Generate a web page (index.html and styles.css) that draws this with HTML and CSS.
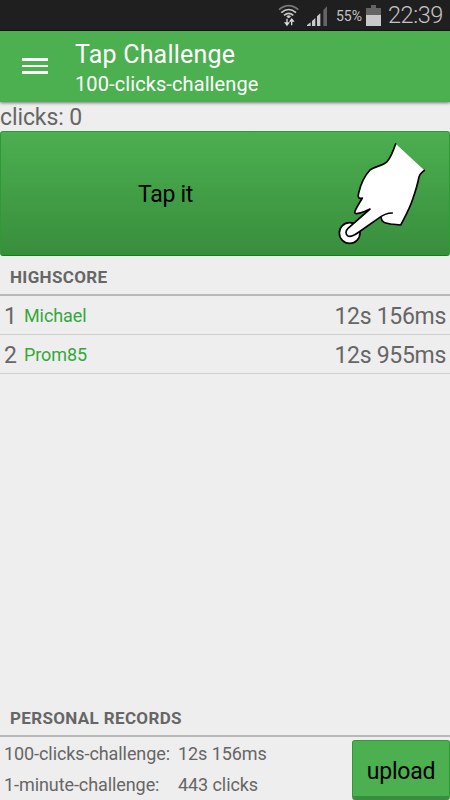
FILE: index.html
```html
<!DOCTYPE html>
<html lang="en">
<head>
  <meta charset="UTF-8" />
  <title>Tap Challenge</title>
  <link rel="stylesheet" href="styles.css">
</head>
<body>

  <div class="statusbar">
    <svg class="wifi" width="22" height="24" viewBox="0 0 66 72">
      <g fill="none" stroke="#c8c8c8" stroke-width="5">
        <path d="M3 17 Q32 -7 61 17" stroke="#777" />
        <path d="M10 26 Q32 7 54 26" />
        <path d="M18 34 Q32 22 46 34" />
      </g>
      <path d="M25 37 Q32 31 39 37 L34 42 H30 Z" fill="#c8c8c8" />
      <path d="M27 44 V58 M41 64 V50" stroke="#d8d8d8" stroke-width="4" />
      <path d="M18 55 H36 L27 67 Z M33 53 L41 42 L50 53 Z" fill="#d8d8d8" />
    </svg>
    <svg class="signal" width="22" height="22" viewBox="0 0 66 66">
      <path d="M3 63 V60 L14 52 V63 Z M18 63 V48 L28 39 V63 Z M33 63 V34 L43 25 V63 Z" fill="#c8c8c8" />
      <path d="M52 63 V15 L63 4 V63 Z" fill="#646464" />
    </svg>
    <span class="percent">55%</span>
    <svg class="battery" width="15" height="21" viewBox="0 0 15 21">
      <path d="M5 0 H10 V3 H15 V11 H0 V3 H5 Z" fill="#646464" />
      <rect y="10" width="15" height="11" fill="#c8c8c8" />
    </svg>
    <span class="time">22:39</span>
  </div>

  <header>
    <div class="menu">
      <span></span>
      <span></span>
      <span></span>
    </div>
    <div class="titles">
      <h1>Tap Challenge</h1>
      <h2>100-clicks-challenge</h2>
    </div>
  </header>

  <div class="clicks">clicks: 0</div>

  <button class="tap">
    <span class="tap-label">Tap it</span>
    <svg class="hand" width="90" height="105" viewBox="50 45 270 315">
      <circle cx="88" cy="321" r="31" fill="#fff" stroke="#000" stroke-width="5" />
      <path d="M226 53 C219 74 211 94 201 106 C188 120 162 121 149 132 C134 148 121 175 115 201 C112 213 114 220 126 216 C116 234 107 245 103 259 C104 268 125 260 149 249 L83 307 C75 314 75 326 83 330 C92 334 105 326 116 318 L181 273 C180 291 194 291 212 294 L241 297 C254 272 267 251 277 220 C286 194 292 174 296 153 C298 143 305 140 312 133 Z" fill="#fff" />
      <path d="M226 53 C219 74 211 94 201 106 C188 120 162 121 149 132 C134 148 121 175 115 201 C112 213 114 220 126 216 C116 234 107 245 103 259 C104 268 125 260 149 249 L83 307 C75 314 75 326 83 330 C92 334 105 326 116 318 L173 278 C187 267 200 261 216 261 M182 274 C184 291 196 291 212 294 L241 297 C254 272 267 251 277 220 C286 194 292 174 296 153 C298 143 305 140 312 133" fill="none" stroke="#000" stroke-width="5" stroke-linejoin="round" stroke-linecap="round" />
    </svg>
  </button>

  <h3 class="section">HIGHSCORE</h3>
  <div class="scores">
    <div class="row">
      <span class="rank">1</span>
      <span class="name">Michael</span>
      <span class="score">12s 156ms</span>
    </div>
    <div class="row">
      <span class="rank">2</span>
      <span class="name">Prom85</span>
      <span class="score">12s 955ms</span>
    </div>
  </div>

  <h3 class="section">PERSONAL RECORDS</h3>
  <div class="records">
    <div class="table">
      <span>100-clicks-challenge:</span>
      <span>12s 156ms</span>
      <span>1-minute-challenge:</span>
      <span>443 clicks</span>
    </div>
    <button class="upload">upload</button>
  </div>

</body>
</html>
```

FILE: styles.css
```css
* {
  box-sizing: border-box;
}

body {
  display: flex;
  flex-direction: column;
  height: 800px;
  margin: 0;
  overflow: hidden;
  font-family: Roboto, sans-serif;
  color: #666;
  background-color: #eee;
}

h1,
h2,
h3 {
  margin: 0;
  font-weight: normal;
}

button {
  padding: 0;
  border: none;
  font-family: inherit;
  color: #000;
  cursor: pointer;
}

.statusbar {
  display: flex;
  justify-content: flex-end;
  align-items: center;
  height: 31px;
  padding-right: 7px;
  background-color: #1f1f1f;
  border-bottom: 1px solid #171320;
  color: #c4c4c4;
}

.wifi {
  margin: 2px 6px 0 0;
}

.signal {
  margin: 1px 8px 0 0;
}

.percent {
  margin-right: 4px;
  padding-top: 2px;
  font-size: 14px;
}

.battery {
  margin-right: 7px;
}

.time {
  font-size: 23.5px;
  font-weight: 300;
  letter-spacing: -0.4px;
}

header {
  position: relative;
  display: flex;
  height: 71px;
  background-color: #4caf50;
  box-shadow: 0 1px 3px rgba(0, 0, 0, 0.5);
  color: #fff;
}

.menu {
  display: flex;
  flex-direction: column;
  gap: 4px;
  width: 26px;
  margin: 27px 27px 0 22px;
}

.menu span {
  height: 2.5px;
  background-color: #fff;
}

.titles h1 {
  margin-top: 9px;
  font-size: 25px;
  line-height: 30px;
  letter-spacing: 0.2px;
}

.titles h2 {
  margin-top: 1px;
  font-size: 20px;
  line-height: 26px;
  letter-spacing: 0.1px;
}

.clicks {
  height: 29px;
  font-size: 23px;
  line-height: 31px;
  letter-spacing: -0.1px;
}

.tap {
  display: flex;
  align-items: center;
  height: 125px;
  background: linear-gradient(#4caf50, #388e3c);
  border: 1px solid #2f9a35;
  border-bottom-color: #0b860f;
  border-radius: 3px;
  font-size: 23px;
  letter-spacing: -0.3px;
}

.tap-label {
  width: 329px;
  padding-top: 2px;
  text-align: center;
}

.hand {
  margin: 0 0 1px 7px;
}

.section {
  height: 40px;
  padding: 3px 0 0 10px;
  border-bottom: 2px solid #b8b8b8;
  font-size: 17px;
  font-weight: 700;
  line-height: 37px;
  letter-spacing: 0.35px;
}

.scores {
  flex-grow: 1;
}

.row {
  display: flex;
  align-items: center;
  height: 39px;
  padding: 2px 4px 0;
  border-bottom: 1px solid #cfcfcf;
  font-size: 23px;
}

.rank {
  width: 20px;
}

.name {
  flex-grow: 1;
  padding-bottom: 1px;
  font-size: 18px;
  letter-spacing: -0.1px;
  color: #35a83a;
}

.score {
  letter-spacing: -0.3px;
}

.records {
  display: flex;
  justify-content: space-between;
  height: 63px;
}

.table {
  display: grid;
  grid-template-columns: 174px auto;
  grid-auto-rows: 31px;
  padding: 1px 0 0 4px;
  font-size: 18px;
  line-height: 31px;
  letter-spacing: -0.08px;
  white-space: nowrap;
}

.upload {
  width: 98px;
  height: 60px;
  margin-top: 3px;
  padding-top: 5px;
  background-color: #4caf50;
  border: 1px solid #2f9a35;
  border-bottom: 4px solid #388e3c;
  border-radius: 3px;
  font-size: 23px;
  letter-spacing: -0.2px;
}
```
